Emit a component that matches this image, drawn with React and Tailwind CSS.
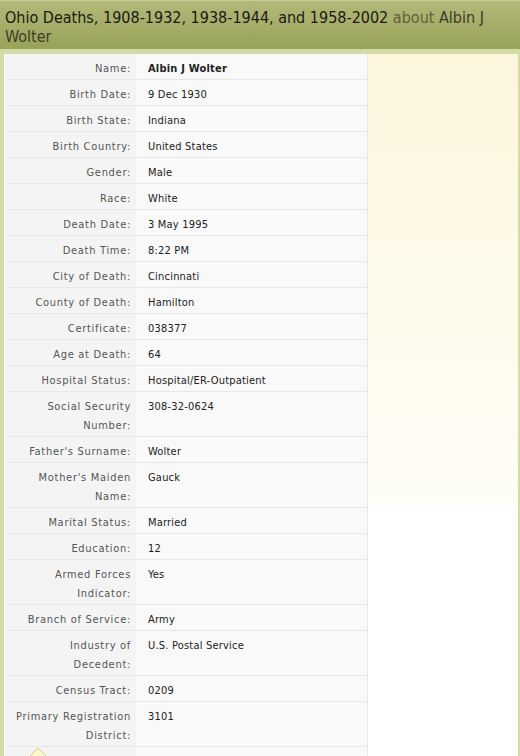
import React from "react";

const rows = [
  ["Name:", "Albin J Wolter", true],
  ["Birth Date:", "9 Dec 1930"],
  ["Birth State:", "Indiana"],
  ["Birth Country:", "United States"],
  ["Gender:", "Male"],
  ["Race:", "White"],
  ["Death Date:", "3 May 1995"],
  ["Death Time:", "8:22 PM"],
  ["City of Death:", "Cincinnati"],
  ["County of Death:", "Hamilton"],
  ["Certificate:", "038377"],
  ["Age at Death:", "64"],
  ["Hospital Status:", "Hospital/ER-Outpatient"],
  ["Social Security Number:", "308-32-0624"],
  ["Father's Surname:", "Wolter"],
  ["Mother's Maiden Name:", "Gauck"],
  ["Marital Status:", "Married"],
  ["Education:", "12"],
  ["Armed Forces Indicator:", "Yes"],
  ["Branch of Service:", "Army"],
  ["Industry of Decedent:", "U.S. Postal Service"],
  ["Census Tract:", "0209"],
  ["Primary Registration District:", "3101"],
];

export default function App() {
  return (
    <div
      className="w-[520px] h-[756px] overflow-hidden bg-white"
      style={{ fontFamily: "Tahoma, 'DejaVu Sans Condensed', 'DejaVu Sans', sans-serif" }}
    >
      <div className="h-[49px] border-t border-[#c6cb95] bg-gradient-to-b from-[#b3b979] to-[#98a259] px-[5px] pt-[7px] text-[16px] leading-[19px] text-[#1a1a10]">
        Ohio Deaths, 1908-1932, 1938-1944, and 1958-2002{" "}
        <span className="text-[#5e6142]">about</span>{" "}
        <span className="text-[#3c3d26]">Albin J Wolter</span>
      </div>
      <div className="h-[5px] bg-[#d4dba7]" />
      <div className="flex h-[702px] border-l-[4px] border-r-[2px] border-[#d4dba7]">
        <div className="w-[364px] pl-[1px] bg-white">
          <div className="border-r border-[#e6e6e6]">
            {rows.map(([label, value, bold], i) => (
              <div key={i} className="flex border-b border-[#e8e8e8]">
                <div className="w-[131px] shrink-0 bg-[#f4f4f4] pl-[8px] pr-[5px] pt-[5px] pb-[1px] text-right text-[11px] leading-[19px] tracking-[0.7px] text-[#555]">
                  {label}
                </div>
                <div
                  className={
                    "flex-1 bg-[#f9f9f9] pl-[12px] pt-[5px] pb-[1px] text-[11px] leading-[19px] tracking-[0.2px] text-[#222] " +
                    (bold ? "font-bold" : "")
                  }
                >
                  {value}
                </div>
              </div>
            ))}
            <div className="flex h-[40px]">
              <div className="relative w-[131px] shrink-0 bg-[#f4f4f4]">
                <svg className="absolute left-[22px] top-0" width="22" height="12" viewBox="0 0 22 12">
                  <path d="M1 11 L11 1 L21 11" fill="#fdf7cf" stroke="#d9cc74" strokeWidth="1" />
                </svg>
              </div>
              <div className="flex-1 bg-[#f9f9f9]" />
            </div>
          </div>
        </div>
        <div className="flex-1">
          <div className="h-[449px] bg-gradient-to-b from-[#fdf6dd] to-[#fefdf6]" />
        </div>
      </div>
    </div>
  );
}
